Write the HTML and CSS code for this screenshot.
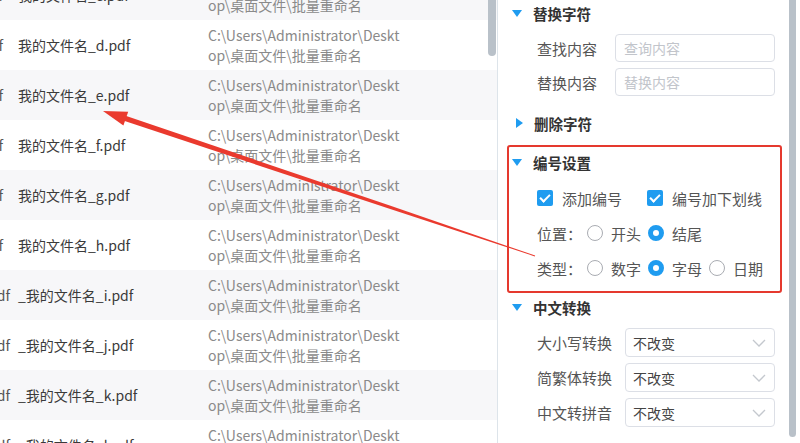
FILE: index.html
```html
<!DOCTYPE html>
<html lang="zh-CN">
<head>
	<meta charset="utf-8">
	<title>批量重命名</title>
	<link rel="stylesheet" href="styles.css">
</head>
<body>
	<div id="app">
		<div class="list-wrap">
			<ul class="file-list">
				<li class="row odd"><div class="old">我的文件名_c.pdf</div><div class="name">我的文件名_c.pdf</div><div class="path">C:\Users\Administrator\Deskt<br>op\桌面文件\批量重命名</div></li>
				<li class="row"><div class="old">我的文件名_d.pdf</div><div class="name">我的文件名_d.pdf</div><div class="path">C:\Users\Administrator\Deskt<br>op\桌面文件\批量重命名</div></li>
				<li class="row odd"><div class="old">我的文件名_e.pdf</div><div class="name">我的文件名_e.pdf</div><div class="path">C:\Users\Administrator\Deskt<br>op\桌面文件\批量重命名</div></li>
				<li class="row"><div class="old">我的文件名_f.pdf</div><div class="name">我的文件名_f.pdf</div><div class="path">C:\Users\Administrator\Deskt<br>op\桌面文件\批量重命名</div></li>
				<li class="row odd"><div class="old">我的文件名_g.pdf</div><div class="name">我的文件名_g.pdf</div><div class="path">C:\Users\Administrator\Deskt<br>op\桌面文件\批量重命名</div></li>
				<li class="row"><div class="old">我的文件名_h.pdf</div><div class="name">我的文件名_h.pdf</div><div class="path">C:\Users\Administrator\Deskt<br>op\桌面文件\批量重命名</div></li>
				<li class="row odd"><div class="old wide">我的文件名_i.pdf</div><div class="name">_我的文件名_i.pdf</div><div class="path">C:\Users\Administrator\Deskt<br>op\桌面文件\批量重命名</div></li>
				<li class="row"><div class="old wide">我的文件名_j.pdf</div><div class="name">_我的文件名_j.pdf</div><div class="path">C:\Users\Administrator\Deskt<br>op\桌面文件\批量重命名</div></li>
				<li class="row odd"><div class="old wide">我的文件名_k.pdf</div><div class="name">_我的文件名_k.pdf</div><div class="path">C:\Users\Administrator\Deskt<br>op\桌面文件\批量重命名</div></li>
				<li class="row"><div class="old wide">我的文件名_l.pdf</div><div class="name">_我的文件名_l.pdf</div><div class="path">C:\Users\Administrator\Deskt<br>op\桌面文件\批量重命名</div></li>
			</ul>
			<div class="list-bar"></div>
		</div>

		<div class="panel">
			<div class="panel-body">
				<div class="sec-title"><i class="tri-down"></i>替换字符</div>
				<div class="field first"><label>查找内容</label><input type="text" placeholder="查询内容"></div>
				<div class="field"><label>替换内容</label><input type="text" placeholder="替换内容"></div>

				<div class="sec-title gap"><i class="tri-right"></i>删除字符</div>

				<div class="mark-box">
					<div class="sec-title"><i class="tri-down"></i>编号设置</div>
					<div class="opt-row">
						<span class="check-item w110"><i class="check on"></i>添加编号</span>
						<span class="check-item"><i class="check on"></i>编号加下划线</span>
					</div>
					<div class="opt-row">
						<span class="opt-label">位置：</span>
						<span class="radio-item"><i class="radio"></i>开头</span>
						<span class="radio-item"><i class="radio on"></i>结尾</span>
					</div>
					<div class="opt-row">
						<span class="opt-label">类型：</span>
						<span class="radio-item"><i class="radio"></i>数字</span>
						<span class="radio-item"><i class="radio on"></i>字母</span>
						<span class="radio-item"><i class="radio"></i>日期</span>
					</div>
				</div>

				<div class="sec-title after-box"><i class="tri-down"></i>中文转换</div>
				<div class="field sel first"><label>大小写转换</label><div class="select">不改变<svg width="14" height="8" viewBox="0 0 14 8"><polyline points="1,1 7,7 13,1" fill="none" stroke="#c4c8ce" stroke-width="1.3"/></svg></div></div>
				<div class="field sel"><label>简繁体转换</label><div class="select">不改变<svg width="14" height="8" viewBox="0 0 14 8"><polyline points="1,1 7,7 13,1" fill="none" stroke="#c4c8ce" stroke-width="1.3"/></svg></div></div>
				<div class="field sel"><label>中文转拼音</label><div class="select">不改变<svg width="14" height="8" viewBox="0 0 14 8"><polyline points="1,1 7,7 13,1" fill="none" stroke="#c4c8ce" stroke-width="1.3"/></svg></div></div>
			</div>
			<div class="panel-bar"></div>
		</div>

		<!-- 标注箭头 -->
		<svg class="arrow" width="800" height="443" viewBox="0 0 800 443">
			<polygon points="124.83,115.59 390.51,205.78 535.13,255.62 534.87,256.38 389.49,208.82 123.17,120.51" fill="#ea3a2e"/>
			<polygon points="103,111 128.2,111.8 123.4,125.4" fill="#ea3a2e"/>
		</svg>
	</div>
</body>
</html>
```
FILE: styles.css
```css
*{
	margin: 0;
	padding: 0;
	box-sizing: border-box;
}
body{
	font-family: "Noto Sans CJK SC", "Microsoft YaHei", sans-serif;
	background: #fff;
	overflow: hidden;
}
#app{
	width: 800px;
	height: 443px;
	display: flex;
	position: relative;
	overflow: hidden;
}

/* 左侧文件列表 */
.list-wrap{
	width: 498px;
	height: 443px;
	border-right: 1px solid #dde4ea;
	overflow: hidden;
	position: relative;
}
.file-list{
	list-style: none;
	margin-top: -30px;
}
.row{
	height: 50px;
	display: flex;
	align-items: center;
	font-size: 14px;
	background: #fff;
}
.row.odd{
	background: #f7f7f9;
}
.old{
	width: 18px;
	padding-right: 15px;
	display: flex;
	justify-content: flex-end;
	overflow: hidden;
	white-space: nowrap;
	color: #555;
}
.old.wide{
	padding-right: 8px;
}
.name{
	width: 190px;
	color: #3a3a3a;
	white-space: nowrap;
}
.path{
	color: #8a8a8a;
	line-height: 20px;
	white-space: nowrap;
}
.list-bar{
	position: absolute;
	left: 488px;
	top: 0;
	width: 8px;
	height: 56px;
	background: #b9c1c9;
	border-radius: 0 0 4px 4px;
}

/* 右侧设置面板 */
.panel{
	flex: 1;
	display: flex;
	height: 443px;
}
.panel-body{
	width: 290px;
	padding: 0 12px 0 14px;
	font-size: 15px;
	color: #555;
}
.panel-bar{
	width: 7px;
	height: 437px;
	margin-left: 1px;
	background: #b9c1c9;
	border-radius: 0 0 4px 4px;
}
.sec-title{
	height: 26px;
	display: flex;
	align-items: center;
	font-size: 14.5px;
	font-weight: bold;
	color: #333;
}
.sec-title.gap{
	margin-top: 14px;
}
.sec-title.after-box{
	margin-top: 1px;
}
.tri-down{
	width: 0;
	height: 0;
	border-left: 5.5px solid transparent;
	border-right: 5.5px solid transparent;
	border-top: 7px solid #1f9cf0;
	margin-right: 11px;
}
.tri-right{
	width: 0;
	height: 0;
	border-top: 5.5px solid transparent;
	border-bottom: 5.5px solid transparent;
	border-left: 7px solid #1f9cf0;
	margin-left: 4px;
	margin-right: 11px;
}
.field{
	display: flex;
	align-items: center;
	height: 28px;
	margin-top: 6px;
	padding-left: 25px;
}
.field.first{
	margin-top: 8px;
}
.field label{
	width: 78px;
	white-space: nowrap;
}
.field input{
	width: 160px;
	height: 28px;
	border: 1px solid #dcdfe6;
	border-radius: 4px;
	padding: 0 8px;
	font-family: inherit;
	font-size: 14px;
	color: #555;
	outline: none;
}
.field input::placeholder{
	color: #c2c5cb;
}
.field.sel{
	height: 29px;
}
.field.sel label{
	width: 88px;
}
.select{
	width: 150px;
	height: 29px;
	border: 1px solid #dcdfe6;
	border-radius: 4px;
	padding: 0 8px 0 7px;
	display: flex;
	align-items: center;
	justify-content: space-between;
	font-size: 14px;
	color: #444;
}

/* 编号设置（红框标注） */
.mark-box{
	margin: 9px -6px 0 -5px;
	border: 2px solid #e5392e;
	border-radius: 3px;
	padding: 2px 4px 11px 3px;
}
.opt-row{
	display: flex;
	align-items: center;
	height: 24px;
	margin-top: 11px;
	padding-left: 25px;
	white-space: nowrap;
}
.check-item, .radio-item{
	display: flex;
	align-items: center;
}
.w110{
	width: 110px;
}
.check{
	width: 16px;
	height: 16px;
	border-radius: 2px;
	margin-right: 9px;
	background: #1f9cf0;
	position: relative;
}
.check.on::after{
	content: "";
	position: absolute;
	left: 5px;
	top: 2px;
	width: 4px;
	height: 8px;
	border-right: 2px solid #fff;
	border-bottom: 2px solid #fff;
	transform: rotate(45deg);
}
.opt-label{
	width: 50px;
}
.radio-item{
	margin-right: 7px;
}
.radio{
	width: 16px;
	height: 16px;
	border-radius: 50%;
	border: 1px solid #a9acb2;
	margin-right: 8px;
	background: #fff;
}
.radio.on{
	border: 5px solid #1f9cf0;
}

/* 标注箭头覆盖层 */
.arrow{
	position: absolute;
	left: 0;
	top: 0;
	pointer-events: none;
}
```
